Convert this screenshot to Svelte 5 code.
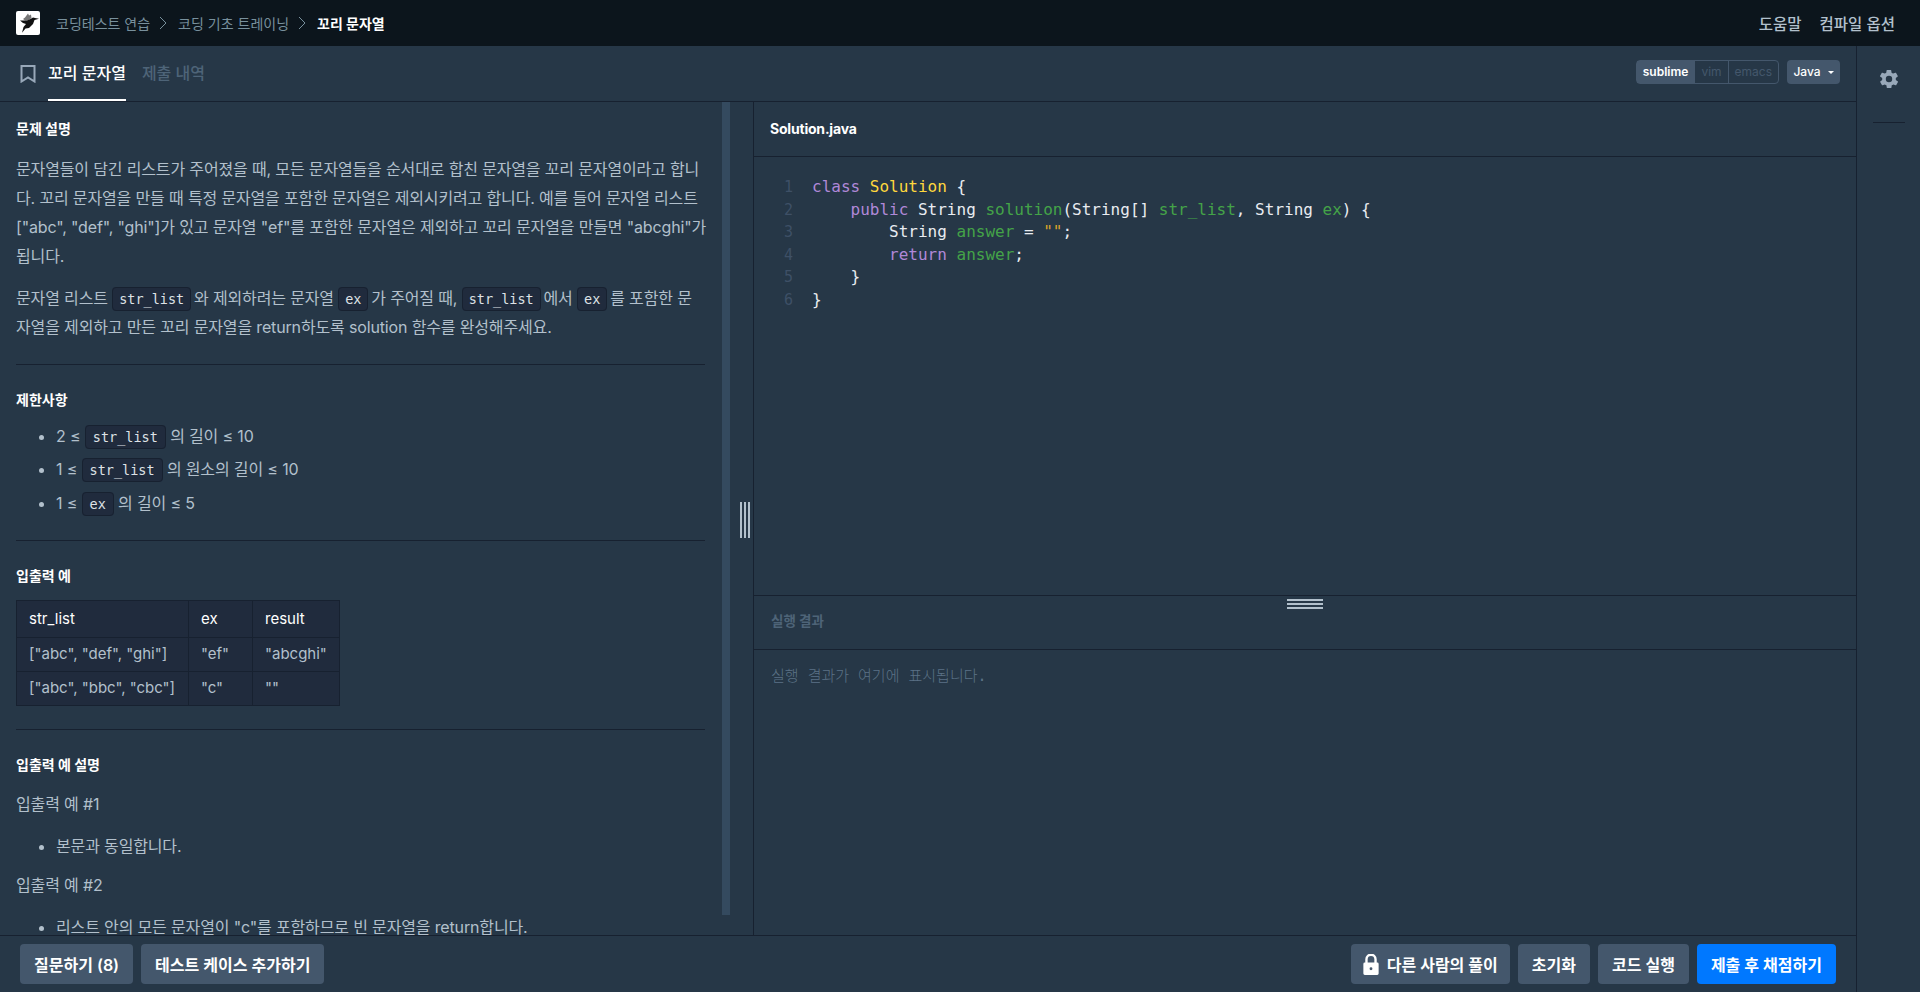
<script>
	let lines = [1, 2, 3, 4, 5, 6];
</script>

<div class="page">
	<header class="top">
		<svg class="logo" viewBox="0 0 24 24" width="24" height="24">
			<rect width="24" height="24" rx="2" fill="#fff" />
			<path fill="#777" d="M7 8l2-1.500 3-4 1 2 2-1 .5 3.500L12 9.500H9z" />
			<path fill="#111" d="M4 9.500h7L14.500 8 17 6.500l2 .5 4 .8L18.500 9 17 13l-4 4-3.500.5-3.500 4.200L7.500 16l2.500-3-3-1z" />
		</svg>
		<nav class="crumbs">
			<span>코딩테스트 연습</span>
			<svg class="chev" viewBox="0 0 8 14" width="8" height="14"><path d="M1 1l6 6-6 6" fill="none" stroke="#78909c" /></svg>
			<span>코딩 기초 트레이닝</span>
			<svg class="chev" viewBox="0 0 8 14" width="8" height="14"><path d="M1 1l6 6-6 6" fill="none" stroke="#78909c" /></svg>
			<strong>꼬리 문자열</strong>
		</nav>
		<div class="top-links">
			<span>도움말</span>
			<span>컴파일 옵션</span>
		</div>
	</header>

	<div class="body">
		<div class="work">
			<div class="tabs">
				<svg class="mark" viewBox="0 0 16 18" width="16" height="18"><path d="M1.500 1h13v15.500L8 12.500l-6.500 4z" fill="none" stroke="#98a8b9" stroke-width="2" /></svg>
				<span class="tab on">꼬리 문자열</span>
				<span class="tab">제출 내역</span>
				<div class="modes">
					<span class="mode on">sublime</span>
					<span class="mode">vim</span>
					<span class="mode">emacs</span>
				</div>
				<button class="lang">Java<i></i></button>
			</div>

			<div class="split">
				<section class="left">
					<div class="guide">
						<h6 class="first">문제 설명</h6>
						<p>문자열들이 담긴 리스트가 주어졌을 때, 모든 문자열들을 순서대로 합친 문자열을 꼬리 문자열이라고 합니다. 꼬리 문자열을 만들 때 특정 문자열을 포함한 문자열은 제외시키려고 합니다. 예를 들어 문자열 리스트 ["abc", "def", "ghi"]가 있고 문자열 "ef"를 포함한 문자열은 제외하고 꼬리 문자열을 만들면 "abcghi"가 됩니다.</p>
						<p>문자열 리스트 <code>str_list</code> 와 제외하려는 문자열 <code>ex</code> 가 주어질 때, <code>str_list</code> 에서 <code>ex</code> 를 포함한 문자열을 제외하고 만든 꼬리 문자열을 return하도록 solution 함수를 완성해주세요.</p>
						<hr />
						<h6>제한사항</h6>
						<ul>
							<li>2 ≤ <code>str_list</code> 의 길이 ≤ 10</li>
							<li>1 ≤ <code>str_list</code> 의 원소의 길이 ≤ 10</li>
							<li>1 ≤ <code>ex</code> 의 길이 ≤ 5</li>
						</ul>
						<hr />
						<h6>입출력 예</h6>
						<table>
							<thead>
								<tr><th>str_list</th><th>ex</th><th>result</th></tr>
							</thead>
							<tbody>
								<tr><td>["abc", "def", "ghi"]</td><td>"ef"</td><td>"abcghi"</td></tr>
								<tr><td>["abc", "bbc", "cbc"]</td><td>"c"</td><td>""</td></tr>
							</tbody>
						</table>
						<hr />
						<h6>입출력 예 설명</h6>
						<p>입출력 예 #1</p>
						<ul><li>본문과 동일합니다.</li></ul>
						<p>입출력 예 #2</p>
						<ul><li>리스트 안의 모든 문자열이 "c"를 포함하므로 빈 문자열을 return합니다.</li></ul>
					</div>
					<div class="scrollbar"></div>
					<div class="grip-v"><b></b><b></b><b></b></div>
				</section>

				<section class="right">
					<h5 class="file">Solution.java</h5>
					<div class="editor">
						<div class="gutter">
							{#each lines as n}<div>{n}</div>{/each}
						</div>
						<pre class="code"><span class="kw">class</span> <span class="cls">Solution</span> {'{'}
    <span class="kw">public</span> String <span class="fn">solution</span>(String[] <span class="fn">str_list</span>, String <span class="fn">ex</span>) {'{'}
        String <span class="fn">answer</span> = <span class="str">""</span>;
        <span class="kw">return</span> <span class="fn">answer</span>;
    {'}'}
{'}'}</pre>
					</div>
					<div class="result-head">
						<span>실행 결과</span>
						<div class="grip-h"><b></b><b></b><b></b></div>
					</div>
					<div class="result">실행 결과가 여기에 표시됩니다.</div>
				</section>
			</div>

			<footer class="actions">
				<button>질문하기 (8)</button>
				<button>테스트 케이스 추가하기</button>
				<div class="spacer"></div>
				<button class="lock">
					<svg viewBox="0 0 16 22" width="16" height="21"><path fill="#fff" d="M4.500 9V5.500a3.500 3.500 0 0 1 7 0V9H14V5.500a6 6 0 0 0-12 0V9H1.500A1.500 1.500 0 0 0 0 10.500v10A1.500 1.500 0 0 0 1.500 22h13a1.500 1.500 0 0 0 1.500-1.500v-10A1.500 1.500 0 0 0 14.500 9zM8 17a1.500 1.500 0 1 1 0-3 1.500 1.500 0 0 1 0 3z" /></svg>
					다른 사람의 풀이
				</button>
				<button>초기화</button>
				<button>코드 실행</button>
				<button class="primary">제출 후 채점하기</button>
			</footer>
		</div>

		<aside class="side">
			<svg class="gear" viewBox="0 0 24 24" width="22" height="22"><path fill="#98a8b9" d="M19.400 13a7.700 7.700 0 0 0 0-2l2.100-1.600a.5.500 0 0 0 .1-.6l-2-3.500a.5.500 0 0 0-.6-.2l-2.500 1a7.300 7.300 0 0 0-1.700-1l-.4-2.600a.5.500 0 0 0-.5-.4h-4a.5.500 0 0 0-.5.400l-.4 2.600a7.700 7.700 0 0 0-1.700 1l-2.500-1a.5.500 0 0 0-.6.200l-2 3.500a.5.500 0 0 0 .1.600L4.600 11a7.900 7.900 0 0 0 0 2l-2.100 1.600a.5.500 0 0 0-.1.600l2 3.500c.1.200.4.300.6.200l2.500-1c.5.400 1.100.7 1.700 1l.4 2.600c0 .2.300.4.500.4h4c.2 0 .5-.2.500-.4l.4-2.600c.6-.3 1.200-.6 1.700-1l2.500 1c.2.100.5 0 .6-.2l2-3.500a.5.500 0 0 0-.1-.6zM12 15.500a3.500 3.500 0 1 1 0-7 3.500 3.500 0 0 1 0 7z" /></svg>
			<div class="side-line"></div>
		</aside>
	</div>
</div>

<style>
	:global(body) {
		margin: 0;
		background: #263747;
	}

	.page {
		height: 992px;
		display: flex;
		flex-direction: column;
		overflow: hidden;
		color: #b2c0cc;
		font-family: Inter, 'Noto Sans CJK KR', sans-serif;
		font-size: 16px;
	}

	.top {
		flex: 0 0 46px;
		background: #0c151c;
		display: flex;
		align-items: center;
		padding: 0 25px 0 16px;
		font-size: 14px;
	}

	.crumbs {
		display: flex;
		align-items: center;
		margin-left: 16px;
		color: #78909c;
	}

	.chev {
		margin: 0 11px 0 9px;
	}

	.crumbs strong {
		color: #fff;
		font-weight: 700;
	}

	.top-links {
		margin-left: auto;
		display: flex;
		gap: 18px;
		color: #b2c0cc;
		font-size: 15.500px;
		font-weight: 500;
	}

	.body {
		flex: 1;
		display: flex;
		min-height: 0;
	}

	.work {
		flex: 1;
		display: flex;
		flex-direction: column;
		min-width: 0;
	}

	.side {
		flex: 0 0 63px;
		border-left: 1px solid #172130;
		display: flex;
		flex-direction: column;
		align-items: center;
	}

	.gear {
		margin-top: 22px;
	}

	.side-line {
		width: 32px;
		height: 1px;
		margin-top: 32px;
		background: #172130;
	}

	.tabs {
		flex: 0 0 55px;
		box-sizing: border-box;
		display: flex;
		align-items: center;
		border-bottom: 1px solid #172130;
		padding: 0 16px 0 20px;
	}

	.mark {
		margin-right: 12px;
	}

	.tab {
		height: 55px;
		box-sizing: border-box;
		line-height: 55px;
		margin-right: 16px;
		font-weight: 500;
		color: #4e6478;
	}

	.tab.on {
		color: #fff;
		border-bottom: 2px solid #fff;
	}

	.modes {
		margin: 0 0 4px auto;
		display: flex;
		height: 24px;
		box-sizing: border-box;
		border: 1px solid #44576c;
		border-radius: 4px;
		font-size: 12px;
		line-height: 22px;
		color: #44576c;
	}

	.mode {
		padding: 0 6px;
		border-left: 1px solid #44576c;
	}

	.mode:first-child {
		border-left: 0;
	}

	.mode.on {
		background: #44576c;
		color: #fff;
		font-weight: 600;
	}

	.lang {
		margin: 0 0 4px 8px;
		width: 53px;
		height: 24px;
		padding: 0;
		border: 0;
		border-radius: 4px;
		background: #44576c;
		color: #fff;
		font: 500 12px Inter, sans-serif;
	}

	.lang i {
		display: inline-block;
		margin-left: 7px;
		vertical-align: 2px;
		border: 3px solid transparent;
		border-top-color: #fff;
		border-bottom: 0;
	}

	.split {
		flex: 1;
		display: flex;
		min-height: 0;
	}

	.left {
		position: relative;
		flex: 0 0 753px;
		display: flex;
		border-right: 1px solid #172130;
		overflow: hidden;
	}

	.guide {
		width: 689px;
		padding: 0 17px 0 16px;
		line-height: 29px;
		flex: none;
		letter-spacing: -0.15px;
	}

	h6 {
		margin: 25px 0 0;
		color: #fff;
		font-size: 14px;
		line-height: 20px;
		font-weight: 700;
		letter-spacing: 0;
	}

	h6.first {
		margin-top: 17px;
	}

	p {
		margin: 13.500px 0 0;
	}

	h6 + p {
		margin-top: 15.500px;
	}

	h6.first + p {
		margin-right: -4px;
	}

	p + p {
		margin-right: 4px;
	}

	hr {
		border: 0;
		border-top: 1px solid #172130;
		margin: 22px 0 0;
	}

	ul {
		margin: 10.500px 0 0;
		padding-left: 40px;
	}

	h6 + ul {
		margin-top: 10px;
	}

	ul + hr {
		margin-top: 20px;
	}

	ul + p {
		margin-top: 8px;
	}

	li {
		line-height: 33.300px;
	}

	code {
		font-family: 'DejaVu Sans Mono', monospace;
		font-size: 13.500px;
		line-height: 1;
		letter-spacing: 0;
		padding: 3px 6px;
		margin-right: -1.500px;
		background: #202b3d;
		border: 1px solid #172130;
		border-radius: 4px;
		color: #dee2e6;
	}

	li code {
		padding: 3px 7px;
		margin-right: 0;
	}

	table {
		margin-top: 14px;
		border-collapse: collapse;
		background: #202b3d;
		font-size: 15px;
		line-height: 22px;
		letter-spacing: 0;
		white-space: nowrap;
	}

	table + hr {
		margin-top: 23px;
	}

	th,
	td {
		box-sizing: border-box;
		border: 1px solid #172130;
		padding: 5.500px 12px;
		text-align: left;
		font-weight: 400;
	}

	th {
		padding: 7px 12px;
		color: #fff;
	}

	th:nth-child(1) {
		width: 172px;
	}

	th:nth-child(2) {
		width: 64px;
	}

	th:nth-child(3) {
		width: 87px;
	}

	.scrollbar {
		margin: 0 0 20px 0;
		width: 8px;
		flex: none;
		background: #344a5f;
	}

	.grip-v {
		position: absolute;
		left: 740px;
		top: 400px;
		display: flex;
		gap: 2px;
	}

	.grip-v b {
		width: 2px;
		height: 36px;
		background: #b2c0cc;
	}

	.right {
		flex: 1;
		display: flex;
		flex-direction: column;
		min-width: 0;
	}

	.file {
		flex: 0 0 54px;
		box-sizing: border-box;
		margin: 0;
		padding: 0 16px;
		line-height: 54px;
		color: #fff;
		font-size: 14px;
		font-weight: 700;
		letter-spacing: -0.2px;
		border-bottom: 1px solid #172130;
	}

	.editor {
		flex: 1;
		display: flex;
		padding-top: 19px;
		font: 16px/22.500px 'DejaVu Sans Mono', monospace;
	}

	.gutter {
		width: 39px;
		text-align: right;
		color: #3e5066;
		margin-right: 19px;
		font-size: 15px;
	}

	.code {
		margin: 0;
		font: inherit;
		color: #e9ecf1;
	}

	.kw { color: #b088d8; }
	.cls { color: #ffd83d; }
	.fn { color: #44a348; }
	.str { color: #d9a22c; }

	.result-head {
		position: relative;
		flex: 0 0 55px;
		box-sizing: border-box;
		padding-left: 17px;
		line-height: 50px;
		border-top: 1px solid #172130;
		border-bottom: 1px solid #172130;
		font-size: 13.500px;
		font-weight: 700;
		color: #4e6478;
	}

	.grip-h {
		position: absolute;
		top: 3px;
		left: 533px;
		display: flex;
		flex-direction: column;
		gap: 2px;
	}

	.grip-h b {
		width: 36px;
		height: 2px;
		background: #b2c0cc;
	}

	.result {
		flex: 0 0 285px;
		box-sizing: border-box;
		padding: 15px 17px;
		font: 300 15px/22px 'DejaVu Sans Mono', 'Noto Sans CJK KR', monospace;
		color: #5b7286;
	}

	.actions {
		flex: 0 0 57px;
		box-sizing: border-box;
		display: flex;
		align-items: center;
		gap: 8px;
		padding: 0 20px;
		border-top: 1px solid #172130;
	}

	.spacer {
		flex: 1;
	}

	.actions button {
		height: 40px;
		padding: 0 14px;
		border: 0;
		border-radius: 4px;
		background: #44576c;
		color: #fff;
		font: 600 16px Inter, 'Noto Sans CJK KR', sans-serif;
	}

	.actions .lock {
		display: flex;
		align-items: center;
		gap: 8px;
		padding: 0 12px;
	}

	.actions .primary {
		background: #0078ff;
	}
</style>
